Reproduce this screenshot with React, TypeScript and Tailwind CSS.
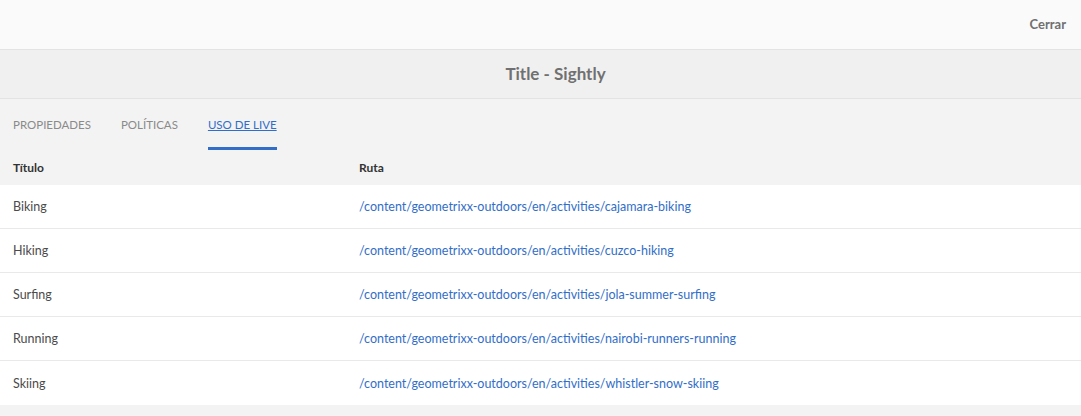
import React from 'react';

const rows = [
  { title: 'Biking', path: '/content/geometrixx-outdoors/en/activities/cajamara-biking' },
  { title: 'Hiking', path: '/content/geometrixx-outdoors/en/activities/cuzco-hiking' },
  { title: 'Surfing', path: '/content/geometrixx-outdoors/en/activities/jola-summer-surfing' },
  { title: 'Running', path: '/content/geometrixx-outdoors/en/activities/nairobi-runners-running' },
  { title: 'Skiing', path: '/content/geometrixx-outdoors/en/activities/whistler-snow-skiing' },
];

const App: React.FC = () => {
  return (
    <div className="w-[1081px] h-[416px] bg-[#f3f3f3] text-[#4b4b4b] overflow-hidden" style={{ fontFamily: 'Lato, "Open Sans", sans-serif' }}>
      <div className="h-[50px] bg-[#fafafa] border-b border-[#e3e3e3] flex items-center justify-end pr-[15px]">
        <button className="text-[13px] font-bold text-[#707070]">Cerrar</button>
      </div>
      <div className="h-[49px] bg-[#f0f0f0] border-b border-[#e3e3e3] flex items-center justify-center pl-[30px]">
        <h1 className="text-[17px] font-bold text-[#707070]">Title - Sightly</h1>
      </div>
      <div className="h-[51px] flex items-end gap-[30px] px-[13px]">
        <div className="h-full flex items-center pt-[3px] text-[11.5px] text-[#8a8a8a] border-b-[3px] border-transparent">PROPIEDADES</div>
        <div className="h-full flex items-center pt-[3px] text-[11.5px] text-[#8a8a8a] border-b-[3px] border-transparent">POLÍTICAS</div>
        <div className="h-full flex items-center pt-[3px] text-[11.5px] text-[#326ec8] underline border-b-[3px] border-[#326ec8]">USO DE LIVE</div>
      </div>
      <div className="h-[35px] flex items-center text-[12px] font-bold text-[#323232]">
        <div className="w-[359px] pl-[13px]">Título</div>
        <div>Ruta</div>
      </div>
      <div className="bg-white">
        {rows.map((r, i) => (
          <div key={r.title} className={`h-[44px] flex items-center pt-[2px] text-[12.5px] ${i < rows.length - 1 ? 'border-b border-[#e9e9e9]' : ''}`}>
            <div className="w-[359px] pl-[13px] text-[#4b4b4b]">{r.title}</div>
            <a className="text-[#326ec8]" href="#">{r.path}</a>
          </div>
        ))}
      </div>
    </div>
  );
};

export default App;
